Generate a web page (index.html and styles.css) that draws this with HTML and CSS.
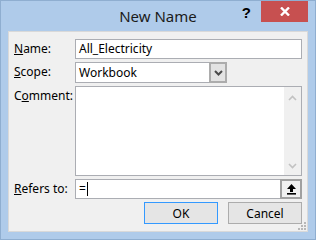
FILE: index.html
```html
<!DOCTYPE html>
<html lang="en">
<head>
    <meta charset="UTF-8">
    <title>New Name</title>
    <link rel="stylesheet" href="styles.css">
</head>
<body>
    <div class="window">
        <div class="title-bar">
            <span></span>
            <span class="title">New Name</span>
            <div class="title-buttons">
                <span class="help-btn">?</span>
                <span class="close-btn">
                    <svg width="10" height="9" viewBox="0 0 10 9"><path d="M1 0.5 L9 8.5 M9 0.5 L1 8.5" stroke="#fff" stroke-width="2.4"/></svg>
                </span>
            </div>
        </div>

        <div class="client">
            <form class="name-form">
                <label class="field-label"><u>N</u>ame:</label>
                <div class="text-box">All_Electricity</div>

                <label class="field-label"><u>S</u>cope:</label>
                <div class="select-box">
                    <span class="select-value">Workbook</span>
                    <span class="select-btn">
                        <svg width="9" height="6" viewBox="0 0 9 6"><path d="M1 1 L4.5 4.5 L8 1" fill="none" stroke="#4a4a4a" stroke-width="2"/></svg>
                    </span>
                </div>

                <label class="field-label">C<u>o</u>mment:</label>
                <div class="memo-box">
                    <div class="memo-text"></div>
                    <div class="scrollbar">
                        <svg width="9" height="6" viewBox="0 0 9 6"><path d="M1 5 L4.5 1.5 L8 5" fill="none" stroke="#c2c2c2" stroke-width="1.6"/></svg>
                        <svg width="9" height="6" viewBox="0 0 9 6"><path d="M1 1 L4.5 4.5 L8 1" fill="none" stroke="#c2c2c2" stroke-width="1.6"/></svg>
                    </div>
                </div>

                <label class="field-label"><u>R</u>efers to:</label>
                <div class="ref-box">
                    <span class="ref-value">=<span class="caret"></span></span>
                    <span class="ref-btn">
                        <svg width="11" height="12" viewBox="0 0 11 12"><path d="M5.5 1 L10 6 H7 V9 H4 V6 H1 Z" fill="#000"/><rect x="1" y="10" width="9" height="1.6" fill="#000"/></svg>
                    </span>
                </div>

                <div class="actions">
                    <button type="button" class="btn btn-default">OK</button>
                    <button type="button" class="btn">Cancel</button>
                </div>
            </form>
            <svg class="size-grip" width="9" height="9" viewBox="0 0 9 9">
                <rect x="7" y="1" width="2" height="2" fill="#b8b8b8"/>
                <rect x="4" y="4" width="2" height="2" fill="#b8b8b8"/>
                <rect x="7" y="4" width="2" height="2" fill="#b8b8b8"/>
                <rect x="1" y="7" width="2" height="2" fill="#b8b8b8"/>
                <rect x="4" y="7" width="2" height="2" fill="#b8b8b8"/>
                <rect x="7" y="7" width="2" height="2" fill="#b8b8b8"/>
            </svg>
        </div>
    </div>
</body>
</html>
```

FILE: styles.css
```css
:root {
    --frame-color: #afcbea;
    --client-bg: #f0f0f0;
    --box-border: #abadb3;
    --text-dark: #000000;
}

* {
    margin: 0;
    padding: 0;
    box-sizing: border-box;
}

body {
    font-family: 'Noto Sans', 'Open Sans', sans-serif;
    font-size: 12px;
    color: var(--text-dark);
    background: var(--frame-color);
}

.window {
    width: 316px;
    height: 240px;
    background: var(--frame-color);
    border: 1px solid #8faed0;
    padding: 0 7px 7px 7px;
    display: flex;
    flex-direction: column;
}

.title-bar {
    height: 30px;
    display: grid;
    grid-template-columns: 1fr auto 1fr;
    align-items: start;
}

.title {
    font-size: 15px;
    color: #1b1b1b;
    line-height: 15px;
    padding-top: 8px;
}

.title-buttons {
    display: flex;
    justify-content: flex-end;
    align-items: flex-start;
}

.help-btn {
    font-family: 'Liberation Sans', sans-serif;
    font-weight: bold;
    font-size: 15px;
    line-height: 15px;
    padding-top: 4px;
    margin-right: 10px;
}

.close-btn {
    width: 47px;
    height: 21px;
    background: #c75050;
    display: flex;
    align-items: center;
    justify-content: center;
}

.client {
    flex: 1;
    position: relative;
    background: var(--client-bg);
    border: 1px solid #d9d9d9;
    padding: 7px 5px 0 5px;
}

.name-form {
    display: grid;
    grid-template-columns: 61px 1fr;
    row-gap: 3px;
}

.field-label {
    padding-top: 2px;
    line-height: 15px;
}

.text-box,
.select-box,
.memo-box,
.ref-box {
    background: #fff;
    border: 1px solid var(--box-border);
}

.text-box {
    height: 20px;
    padding: 1px 3px;
    line-height: 16px;
}

.select-box {
    width: 152px;
    height: 21px;
    display: flex;
}

.select-value {
    flex: 1;
    padding: 1px 3px;
    line-height: 17px;
}

.select-btn {
    width: 18px;
    margin: -1px -1px -1px 0;
    background: #e3e3e3;
    border: 2px solid #acacac;
    display: flex;
    align-items: center;
    justify-content: center;
}

.memo-box {
    height: 90px;
    display: flex;
}

.memo-text {
    flex: 1;
}

.scrollbar {
    width: 17px;
    background: #f0f0f0;
    display: flex;
    flex-direction: column;
    justify-content: space-between;
    align-items: center;
    padding: 8px 0 6px 0;
}

.ref-box {
    height: 20px;
    display: flex;
}

.ref-value {
    flex: 1;
    padding: 1px 3px;
    line-height: 16px;
    display: flex;
    align-items: center;
}

.caret {
    width: 1px;
    height: 14px;
    background: #000;
    margin-left: 1px;
}

.ref-btn {
    width: 22px;
    margin: -1px -1px -1px 0;
    background: #f0f0f0;
    border: 2px solid #a0a0a0;
    display: flex;
    align-items: center;
    justify-content: center;
}

.actions {
    grid-column: 1 / 3;
    display: flex;
    justify-content: flex-end;
    gap: 10px;
}

.btn {
    width: 74px;
    height: 22px;
    font-family: inherit;
    font-size: 12px;
    color: #000;
    background: #e5e5e5;
    border: 1px solid #acacac;
}

.btn-default {
    border: 1px solid #3399ff;
}

.size-grip {
    position: absolute;
    right: 1px;
    bottom: 1px;
}
```
